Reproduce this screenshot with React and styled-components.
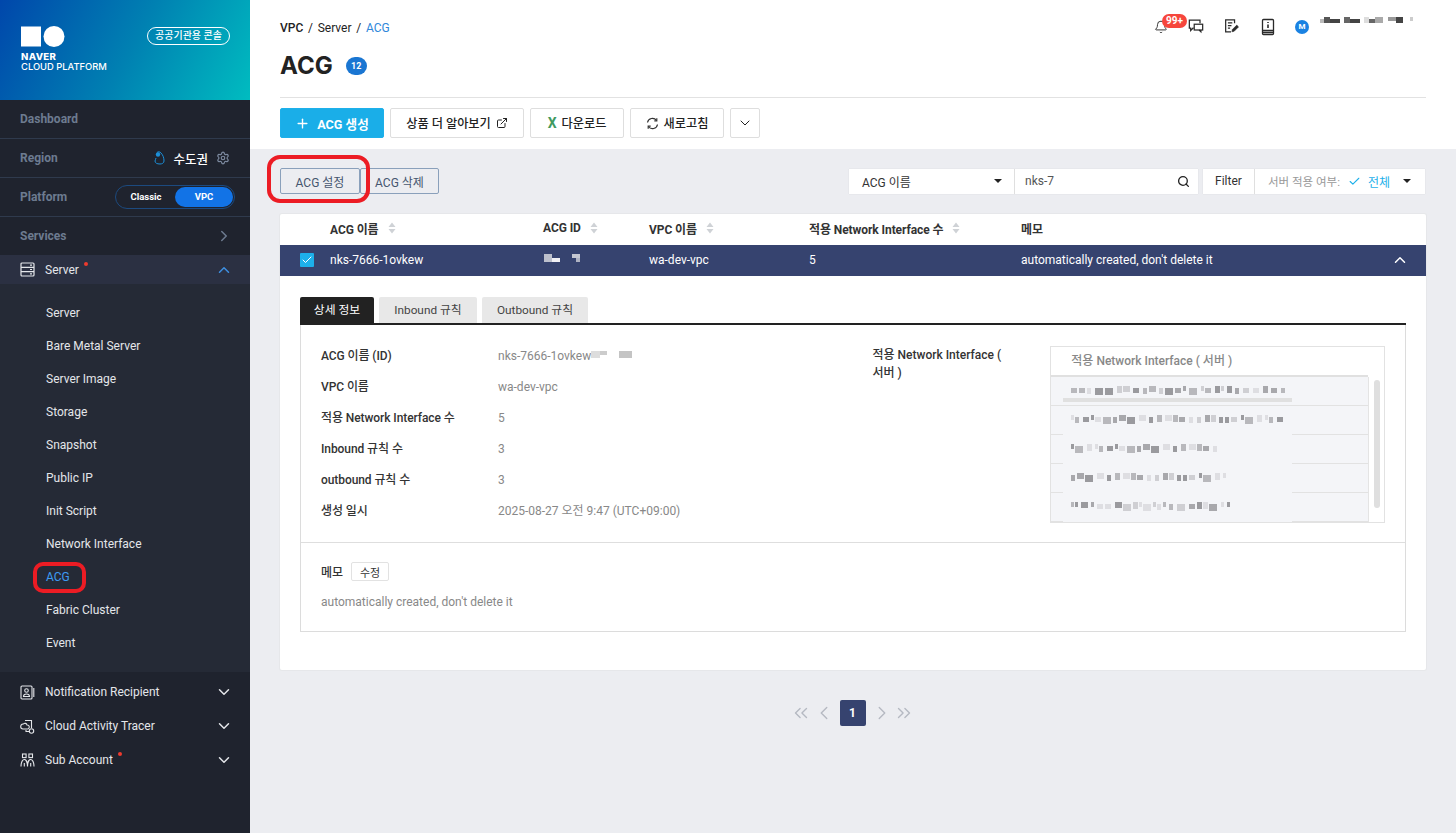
import React from 'react';
import styled, { createGlobalStyle } from 'styled-components';
import {
  Settings, ChevronRight, ChevronDown, ChevronUp, ChevronLeft, ChevronsLeft, ChevronsRight,
  Plus, ExternalLink, Search, Check, Bell,
} from 'lucide-react';

const FONT = 'Roboto, "Noto Sans CJK KR", sans-serif';

const GlobalStyle = createGlobalStyle`
  html, body { margin: 0; padding: 0; height: 100%; }
  body { font-family: ${FONT}; font-size: 12px; color: #222; background: #ecedf1; }
  * { box-sizing: border-box; }
`;

const Page = styled.div`
  display: flex;
  width: 100%;
  height: 833px;
  overflow: hidden;
`;

/* sidebar */
const Sidebar = styled.aside`
  width: 250px;
  flex: none;
  background: #1f232e;
  display: flex;
  flex-direction: column;
`;

const Brand = styled.div`
  height: 100px;
  padding: 26px 20px 0 21px;
  display: flex;
  justify-content: space-between;
  align-items: flex-start;
  background: linear-gradient(118deg, #0047ab 0%, #0081b2 52%, #00bcc0 100%);
  color: #fff;
`;

const BrandText = styled.div`
  margin-top: 5px;
  font-size: 9.4px;
  line-height: 10px;
  font-family: Inter, sans-serif;
  font-weight: 500;
  b { font-weight: 800; display: block; font-size: 9.6px; letter-spacing: 0.35px; }
`;

const ConsoleTag = styled.span`
  height: 18px;
  width: 83px;
  margin-top: 1px;
  border: 1px solid #fff;
  border-radius: 9px;
  font-size: 10px;
  line-height: 15px;
  text-align: center;
  font-weight: 500;
`;

const MenuRow = styled.div`
  height: ${p => (p.$plain ? 38 : 39)}px;
  padding: 0 20px;
  display: flex;
  align-items: center;
  justify-content: space-between;
  border-bottom: ${p => (p.$plain ? 'none' : '1px solid #2f3a4d')};
  color: #6d7b90;
  font-weight: 700;
  font-size: 12px;
`;

const RegionValue = styled.div`
  display: flex;
  align-items: center;
  color: #fff;
  font-weight: 500;
  font-size: 12.5px;
  gap: 8px;
  svg { display: block; }
`;

const PlatformSwitch = styled.div`
  width: 120px;
  height: 24px;
  margin-right: -5px;
  border: 1px solid #1c4a7f;
  border-radius: 12px;
  display: flex;
  align-items: center;
  padding: 1px;
  color: #fff;
  font-weight: 700;
  font-size: 9.5px;
`;

const PlatformOption = styled.span`
  flex: 1;
  height: 20px;
  line-height: 20px;
  text-align: center;
  border-radius: 10px;
  background: ${p => (p.$on ? '#1273e6' : 'transparent')};
`;

const GroupRow = styled.div`
  height: ${p => p.$h || 34}px;
  padding: 0 20px;
  display: flex;
  align-items: center;
  color: #e4e6ea;
  font-size: 12px;
  background: ${p => (p.$open ? '#2b3042' : 'transparent')};
  > span { margin-left: 10px; position: relative; }
  > svg:last-child { margin-left: auto; margin-right: -3px; }
`;

const RedDot = styled.i`
  position: absolute;
  top: -1px;
  right: -9px;
  width: 4px;
  height: 4px;
  border-radius: 50%;
  background: #ee3a2e;
`;

const SubList = styled.div`
  height: 388px;
  padding-top: 13px;
  margin-bottom: 3px;
  background: #252a36;
`;

const SubItem = styled.div`
  height: 33px;
  line-height: 33px;
  padding-left: 46px;
  color: ${p => (p.$on ? '#3e9bf2' : '#e4e6ea')};
  font-size: 12px;
  position: relative;
`;

const Ring = styled.i`
  position: absolute;
  border: 4px solid #ec1c24;
  border-radius: 10px;
  pointer-events: none;
`;

const SidebarRing = styled(Ring)`
  left: 33px;
  top: 1px;
  width: 53px;
  height: 31px;
`;

/* header */
const Main = styled.main`
  flex: 1;
  min-width: 0;
  display: flex;
  flex-direction: column;
`;

const Head = styled.header`
  height: 149px;
  flex: none;
  background: #fff;
  padding: 0 30px;
`;

const TopLine = styled.div`
  height: 51px;
  display: flex;
  justify-content: space-between;
  align-items: flex-start;
`;

const Crumbs = styled.div`
  margin-top: 21px;
  font-size: 12px;
  line-height: 15px;
  display: flex;
  gap: 4.75px;
  b { font-weight: 500; }
  em { font-style: normal; color: #2f87da; }
`;

const TopIcons = styled.div`
  width: 261px;
  margin-right: 11px;
  height: 51px;
  display: flex;
  align-items: flex-start;
  color: #333;
`;

const IconSlot = styled.span`
  display: block;
  flex: none;
  margin-top: 18px;
  margin-left: ${p => p.$gap || 0}px;
  position: relative;
  svg { display: block; }
`;

const Badge = styled.span`
  position: absolute;
  left: 8px;
  top: -4px;
  width: 25px;
  height: 14px;
  border-radius: 7px;
  background: #f6463c;
  color: #fff;
  font-size: 10px;
  font-weight: 700;
  line-height: 14px;
  text-align: center;
`;

const Avatar = styled.span`
  flex: none;
  margin: 20px 0 0 18px;
  width: 14px;
  height: 14px;
  border-radius: 50%;
  background: #1a82e2;
  color: #fff;
  font-size: 8px;
  font-weight: 700;
  line-height: 14px;
  text-align: center;
`;

const TitleLine = styled.div`
  height: 47px;
  padding-top: 1px;
  display: flex;
  align-items: flex-start;
  border-bottom: 1px solid #e2e2e2;
  h1 {
    margin: 0;
    font-size: 24px;
    line-height: 28px;
    font-weight: 700;
    font-family: Inter, sans-serif;
  }
`;

const CountBadge = styled.span`
  margin: 5px 0 0 13px;
  width: 21px;
  height: 18px;
  border-radius: 9px;
  background: #1a76d2;
  color: #fff;
  font-size: 9px;
  font-weight: 700;
  line-height: 18px;
  text-align: center;
`;

const ActionBar = styled.div`
  margin-top: 10px;
  display: flex;
  gap: 6px;
`;

const ActionButton = styled.button`
  height: 30px;
  width: ${p => p.$w}px;
  padding: 0;
  display: flex;
  align-items: center;
  justify-content: center;
  gap: ${p => p.$gap || 5}px;
  border-radius: 2px;
  border: 1px solid ${p => (p.$primary ? '#1db0ea' : '#dedede')};
  background: ${p => (p.$primary ? '#1aaee8' : '#fff')};
  color: ${p => (p.$primary ? '#fff' : '#222')};
  font-family: ${FONT};
  font-size: ${p => (p.$primary ? 12.6 : 12.2)}px;
  font-weight: ${p => (p.$primary ? 700 : 500)};
`;

const ExcelMark = styled.span`
  color: #3f9a5f;
  font-size: 14px;
  font-weight: 700;
`;

/* body */
const Body = styled.div`
  flex: 1;
  padding: 19px 30px 0;
`;

const ToolRow = styled.div`
  display: flex;
  align-items: center;
  justify-content: space-between;
  height: 26px;
  margin-bottom: 20px;
`;

const Left = styled.div`
  display: flex;
  position: relative;
`;

const OutlineButton = styled.button`
  width: ${p => p.$w}px;
  height: 26px;
  padding: 0;
  background: transparent;
  border: 1px solid #8aa0bb;
  border-radius: 2px;
  color: #46566f;
  font-family: ${FONT};
  font-size: 12px;
`;

const ButtonRing = styled(Ring)`
  left: -13px;
  top: -13px;
  width: 103px;
  height: 48px;
  border-radius: 13px;
`;

const Right = styled.div`
  display: flex;
  margin-right: 1px;
`;

const FilterField = styled.div`
  width: ${p => p.$w}px;
  height: 25px;
  margin-right: ${p => p.$mr || 0}px;
  padding: 0 ${p => p.$pr || 12}px 0 ${p => p.$pl || 12}px;
  background: #fff;
  border-right: ${p => (p.$split ? '1px solid #e4e4e4' : 'none')};
  display: flex;
  align-items: center;
  justify-content: space-between;
  font-size: 12px;
  color: ${p => p.$c || '#333'};
  box-shadow: 0 0 1px rgba(0, 0, 0, 0.12);
`;

const Caret = styled.i`
  width: 0;
  height: 0;
  border-left: 4px solid transparent;
  border-right: 4px solid transparent;
  border-top: 4px solid #222;
`;

const ServerFilter = styled.span`
  display: flex;
  align-items: center;
  color: #999;
  font-size: 11.5px;
  svg { margin: 0 7px 0 8px; }
  em { font-style: normal; color: #1db0ea; font-size: 12px; }
`;

const Card = styled.section`
  height: 456px;
  background: #fff;
  box-shadow: 0 0 0 1px #e6e7ea;
  border-radius: 2px;
  margin-bottom: 30px;
`;

const columns = '50px 213px 106px 160px 212px 1fr 35px';

const HeaderRow = styled.div`
  display: grid;
  grid-template-columns: ${columns};
  height: 31px;
  padding-bottom: 3px;
  align-items: center;
  font-weight: 700;
  font-size: 12px;
  letter-spacing: -0.08px;
  color: #333;
  > span { display: flex; align-items: center; gap: 9px; }
`;

const SelectedRow = styled.div`
  display: grid;
  grid-template-columns: ${columns};
  height: 31px;
  padding-bottom: 1px;
  align-items: center;
  background: #36436f;
  color: #fff;
  font-size: 12px;
`;

const CheckBox = styled.span`
  margin-left: 20px;
  width: 14px;
  height: 14px;
  border-radius: 1px;
  background: #1db0ea;
  display: flex;
  align-items: center;
  justify-content: center;
`;

const DetailWrap = styled.div`
  padding: 21px 20px 0;
`;

const Tabs = styled.div`
  display: flex;
  gap: 5px;
  height: 28px;
  border-bottom: 2px solid #222;
`;

const Tab = styled.div`
  width: ${p => p.$w}px;
  height: 26px;
  line-height: 27px;
  text-align: center;
  border-radius: 2px 2px 0 0;
  font-size: 11.8px;
  background: ${p => (p.$on ? '#222' : '#e8e8e8')};
  color: ${p => (p.$on ? '#fff' : '#444')};
`;

const DetailBox = styled.div`
  height: 307px;
  border: 1px solid #dcdcdc;
  border-top: none;
`;

const DetailTop = styled.div`
  height: 218px;
  padding: 16px 20px 0;
  display: flex;
  border-bottom: 1px solid #dedede;
`;

const Fields = styled.div`
  width: 552px;
`;

const Field = styled.div`
  display: flex;
  height: 31px;
  line-height: 31px;
  font-size: 12px;
  color: #888;
  b { width: 177px; font-weight: 500; color: #333; letter-spacing: -0.08px; }
`;

const SideLabel = styled.div`
  width: 178px;
  padding-top: 5px;
  font-size: 12px;
  line-height: 18px;
  font-weight: 500;
  color: #333;
`;

const NicBox = styled.div`
  width: 335px;
  height: 177px;
  margin-top: 5px;
  border: 1px solid #e2e2e2;
  background: #fff;
`;

const NicHead = styled.div`
  height: 30px;
  line-height: 28px;
  padding-left: 20px;
  font-size: 12px;
  font-weight: 500;
  color: #888;
  border-bottom: 2px solid #e0e0e0;
  margin-right: 16px;
`;

const NicBody = styled.div`
  display: flex;
  height: 145px;
`;

const NicRows = styled.div`
  width: 317px;
  background: #f4f5f8;
  overflow: hidden;
`;

const NicRow = styled.div`
  height: 29px;
  border-bottom: 1px solid #e2e2e2;
`;

const NicCell = styled.div`
  margin-left: 12px;
  width: 229px;
  height: ${p => (p.$first ? 25 : 29)}px;
  padding: 6px 0 0 8px;
  background: #f4f5f8;
  border-bottom: ${p => (p.$first ? '4px solid #e0e0e0' : 'none')};
`;

const ScrollTrack = styled.div`
  flex: 1;
  border-left: 1px solid #e4e4e4;
  padding: 3px 4px 0 5px;
`;

const ScrollThumb = styled.div`
  height: 128px;
  border-radius: 3px;
  background: #dfdfdf;
`;

const Memo = styled.div`
  padding: 19px 20px 0;
`;

const MemoHead = styled.div`
  display: flex;
  align-items: center;
  gap: 8px;
  font-size: 12px;
  font-weight: 500;
  color: #333;
`;

const SmallButton = styled.button`
  width: 38px;
  height: 19px;
  padding: 0;
  background: #fff;
  border: 1px solid #e2e2e2;
  border-radius: 2px;
  font-family: ${FONT};
  font-size: 11px;
  color: #333;
`;

const MemoText = styled.p`
  margin: 14px 0 0;
  font-size: 12px;
  color: #888;
`;

const Pager = styled.nav`
  display: flex;
  justify-content: center;
  align-items: center;
  padding-right: 2px;
  color: #b5b9c2;
  svg { display: block; }
`;

const PageNum = styled.span`
  width: 26px;
  height: 26px;
  margin: 0 5px;
  border-radius: 2px;
  background: #36436f;
  color: #fff;
  font-size: 12px;
  font-weight: 700;
  line-height: 26px;
  text-align: center;
`;

/* drawings */
const SortIcon = () => (
  <svg width="8" height="12" viewBox="0 0 8 12">
    <path d="M4 0.5 7.5 5H.5zM4 11.5.5 7h7z" fill="#cfd2d6" />
  </svg>
);

// mosaic blocks standing in for the masked names
const Mosaic = ({ w, h = 14, blocks, style }) => (
  <svg width={w} height={h} style={{ display: 'block', ...style }}>
    {blocks.map(([x, y, bw, bh, c], i) => (
      <rect key={i} x={x} y={y} width={bw} height={bh} fill={c} />
    ))}
  </svg>
);

const strip = (seed, n) => {
  const out = [];
  let x = 0;
  let s = seed;
  while (x < n) {
    s = (s * 37 + 11) % 101;
    const bw = 3 + (s % 6);
    const shade = ['#9a9a9e', '#b8b8bc', '#cfcfd3', '#a8a8ac', '#dedee2'][s % 5];
    out.push([x, 3 + (s % 2) * 2, bw, 5 + (s % 3), shade]);
    x += bw + 1 + (s % 4);
  }
  return out;
};

const Logo = () => (
  <svg width="44" height="21" viewBox="0 0 44 21" style={{ display: 'block' }}>
    <rect x="0" y="0.5" width="20" height="20" fill="#fff" />
    <circle cx="33" cy="10.5" r="10.5" fill="#fff" />
  </svg>
);

const RegionPin = () => (
  <svg width="11" height="14" viewBox="0 0 11 14" fill="none">
    <path d="M3 1.500c1-1 3-1 4 .5 2 2 3 5 3 8 0 2-2 3-4 3-3 0-5-1-5-3 0-1 1-2 1-3" stroke="#1c8fd8" strokeWidth="1" />
    <circle cx="4" cy="3.500" r="2.200" fill="#1c8fd8" />
  </svg>
);

const ServerIcon = () => (
  <svg width="15" height="15" viewBox="0 0 15 15" fill="none" stroke="#e4e6ea" strokeWidth="1.2">
    <rect x="1" y="1" width="13" height="13" rx="1" />
    <path d="M1 5.300h13M1 9.700h13" />
    <path d="M10 3.200h2M10 7.500h2M10 11.800h2" />
  </svg>
);

const RecipientIcon = () => (
  <svg width="15" height="15" viewBox="0 0 15 15" fill="none" stroke="#e4e6ea" strokeWidth="1.1">
    <rect x="1" y="1" width="11" height="13" rx="1" />
    <path d="M13.800 3v9" />
    <circle cx="6.500" cy="5.500" r="1.800" />
    <path d="M3.500 11.500c0-3.400 6-3.400 6 0z" />
  </svg>
);

const TracerIcon = () => (
  <svg width="15" height="15" viewBox="0 0 15 15" fill="none" stroke="#e4e6ea" strokeWidth="1.1">
    <path d="M5 1.500h6.500v7.500" />
    <path d="M3.500 5a2 2 0 0 1 3.500 1 2 2 0 0 1 .5 4H3a2.500 2.500 0 0 1 .5-5z" />
    <path d="M6 11v1.500h3" />
    <circle cx="11.500" cy="12" r="2.200" />
  </svg>
);

const AccountIcon = () => (
  <svg width="15" height="15" viewBox="0 0 15 15" fill="none" stroke="#e4e6ea" strokeWidth="1.1">
    <rect x="2.500" y="1" width="3.600" height="3.600" />
    <rect x="8.900" y="1" width="3.600" height="3.600" />
    <path d="M1 13.500c0-5 2-7 3.300-7s3.200 2 3.200 7c0-5 1.900-7 3.200-7s3.300 2 3.300 7" />
    <path d="M4.300 10v3.500M10.700 10v3.500" />
  </svg>
);

const ChatIcon = () => (
  <svg width="16" height="16" viewBox="0 0 18 18" fill="none" stroke="#2a2a2a" strokeWidth="1.400">
    <path d="M13.500 6V2.500h-12v9H3v2.500l2.500-2.500h1" />
    <rect x="7" y="7" width="9.500" height="6.500" fill="#fff" />
    <path d="M12.500 13.500l2 2v-2" />
  </svg>
);

const NoteIcon = () => (
  <svg width="16" height="16" viewBox="0 0 18 18" fill="none" stroke="#2a2a2a" strokeWidth="1.400">
    <path d="M13 6V2H3v13.500h6" />
    <path d="M5.500 5.500h5M5.500 8.500h4M5.500 11.500h2.500" />
    <path d="M10 15.500l.5-2.500 5-5 2 2-5 5z" fill="#2a2a2a" strokeWidth="0.600" />
  </svg>
);

const BookIcon = () => (
  <svg width="18" height="18" viewBox="0 0 18 18" fill="none" stroke="#2a2a2a" strokeWidth="1.300">
    <rect x="3.500" y="1.500" width="11" height="15" rx="1" />
    <path d="M3.500 12.500h11M3.500 14.500h11" />
    <path d="M9 4v1M9 6.500v3.500" strokeWidth="1.600" />
  </svg>
);

const RefreshIcon = () => (
  <svg width="13" height="13" viewBox="0 0 13 13" fill="none" stroke="#333" strokeWidth="1.200">
    <path d="M1.500 5.500A5 5 0 0 1 10.500 3.500M11.500 7.500A5 5 0 0 1 2.500 9.500" />
    <path d="M10.800 1.300v2.500H8.300M2.200 11.700V9.200h2.500" />
  </svg>
);

const sub = ['Server', 'Bare Metal Server', 'Server Image', 'Storage', 'Snapshot', 'Public IP', 'Init Script', 'Network Interface', 'ACG', 'Fabric Cluster', 'Event'];

const fields = [
  ['VPC 이름', 'wa-dev-vpc'],
  ['적용 Network Interface 수', '5'],
  ['Inbound 규칙 수', '3'],
  ['outbound 규칙 수', '3'],
  ['생성 일시', '2025-08-27 오전 9:47 (UTC+09:00)'],
];

const nicRows = [
  strip(3, 212),
  strip(14, 212),
  strip(27, 150),
  strip(41, 155),
  strip(58, 158),
];

export default function App() {
  return (
    <Page>
      <GlobalStyle />
      <Sidebar>
        <Brand>
          <div>
            <Logo />
            <BrandText>
              <b>NAVER</b>
              CLOUD PLATFORM
            </BrandText>
          </div>
          <ConsoleTag>공공기관용 콘솔</ConsoleTag>
        </Brand>
        <MenuRow>Dashboard</MenuRow>
        <MenuRow>
          Region
          <RegionValue>
            <RegionPin />
            수도권
            <Settings size={14} color="#7d8aa0" />
          </RegionValue>
        </MenuRow>
        <MenuRow>
          Platform
          <PlatformSwitch>
            <PlatformOption>Classic</PlatformOption>
            <PlatformOption $on>VPC</PlatformOption>
          </PlatformSwitch>
        </MenuRow>
        <MenuRow $plain>
          Services
          <ChevronRight size={18} color="#6d7b90" style={{ marginRight: -3 }} />
        </MenuRow>
        <GroupRow $open $h={29}>
          <ServerIcon />
          <span>
            Server
            <RedDot />
          </span>
          <ChevronUp size={18} color="#3e8fe0" />
        </GroupRow>
        <SubList>
          {sub.map(s => (
            <SubItem key={s} $on={s === 'ACG'}>
              {s}
              {s === 'ACG' && <SidebarRing />}
            </SubItem>
          ))}
        </SubList>
        <GroupRow>
          <RecipientIcon />
          <span>Notification Recipient</span>
          <ChevronDown size={18} color="#e4e6ea" />
        </GroupRow>
        <GroupRow>
          <TracerIcon />
          <span>Cloud Activity Tracer</span>
          <ChevronDown size={18} color="#e4e6ea" />
        </GroupRow>
        <GroupRow>
          <AccountIcon />
          <span>
            Sub Account
            <RedDot />
          </span>
          <ChevronDown size={18} color="#e4e6ea" />
        </GroupRow>
      </Sidebar>

      <Main>
        <Head>
          <TopLine>
            <Crumbs>
              <b>VPC</b> / <span>Server</span> / <em>ACG</em>
            </Crumbs>
            <TopIcons>
              <IconSlot>
                <Bell size={14} color="#2a2a2a" strokeWidth={1.6} style={{ marginTop: 2 }} />
                <Badge>99+</Badge>
              </IconSlot>
              <IconSlot $gap={20}><ChatIcon /></IconSlot>
              <IconSlot $gap={19}><NoteIcon /></IconSlot>
              <IconSlot $gap={20}><BookIcon /></IconSlot>
              <Avatar>M</Avatar>
              <Mosaic
                w={95}
                h={12}
                style={{ margin: '15px 0 0 11px' }}
                blocks={[
                  [0, 4, 4, 4, '#bbb'], [4, 2, 6, 6, '#555'], [10, 4, 10, 4, '#444'], [24, 2, 6, 6, '#666'], [30, 4, 10, 4, '#444'],
                  [44, 2, 5, 6, '#ddd'], [49, 4, 6, 4, '#666'], [55, 2, 8, 6, '#aaa'], [68, 2, 8, 4, '#999'], [76, 2, 7, 6, '#444'], [90, 2, 3, 4, '#ccc'],
                ]}
              />
            </TopIcons>
          </TopLine>
          <TitleLine>
            <h1>ACG</h1>
            <CountBadge>12</CountBadge>
          </TitleLine>
          <ActionBar>
            <ActionButton $primary $w={104} $gap={7}>
              <Plus size={15} strokeWidth={2.2} />
              ACG 생성
            </ActionButton>
            <ActionButton $w={134}>
              상품 더 알아보기
              <ExternalLink size={12} />
            </ActionButton>
            <ActionButton $w={94}>
              <ExcelMark>X</ExcelMark>
              다운로드
            </ActionButton>
            <ActionButton $w={94}>
              <RefreshIcon />
              새로고침
            </ActionButton>
            <ActionButton $w={30}>
              <ChevronDown size={16} strokeWidth={1.5} />
            </ActionButton>
          </ActionBar>
        </Head>

        <Body>
          <ToolRow>
            <Left>
              <OutlineButton $w={80}>ACG 설정</OutlineButton>
              <OutlineButton $w={79}>ACG 삭제</OutlineButton>
              <ButtonRing />
            </Left>
            <Right>
              <FilterField $w={166} $split $pl={13}>
                ACG 이름
                <Caret />
              </FilterField>
              <FilterField $w={183} $mr={5} $pl={10} $pr={8} $c="#555">
                nks-7
                <Search size={13} color="#222" strokeWidth={2.4} />
              </FilterField>
              <FilterField $w={52} $split>Filter</FilterField>
              <FilterField $w={170} $pl={13} $pr={14}>
                <ServerFilter>
                  서버 적용 여부:
                  <Check size={13} color="#1db0ea" />
                  <em>전체</em>
                </ServerFilter>
                <Caret />
              </FilterField>
            </Right>
          </ToolRow>

          <Card>
            <HeaderRow>
              <i />
              <span>ACG 이름 <SortIcon /></span>
              <span>ACG ID <SortIcon /></span>
              <span>VPC 이름 <SortIcon /></span>
              <span>적용 Network Interface 수 <SortIcon /></span>
              <span>메모</span>
            </HeaderRow>
            <SelectedRow>
              <CheckBox><Check size={12} color="#fff" strokeWidth={2} /></CheckBox>
              <span>nks-7666-1ovkew</span>
              <Mosaic w={40} h={12} style={{ marginTop: -5 }} blocks={[[1, 2, 8, 8, '#bcc0cc'], [9, 6, 8, 4, '#f0f0f4'], [29, 2, 8, 4, '#c5c8d2'], [33, 6, 4, 4, '#aeb2c2']]} />
              <span>wa-dev-vpc</span>
              <span>5</span>
              <span>automatically created, don't delete it</span>
              <ChevronUp size={18} strokeWidth={2} />
            </SelectedRow>
            <DetailWrap>
              <Tabs>
                <Tab $on $w={74}>상세 정보</Tab>
                <Tab $w={98}>Inbound 규칙</Tab>
                <Tab $w={106}>Outbound 규칙</Tab>
              </Tabs>
              <DetailBox>
                <DetailTop>
                  <Fields>
                    <Field>
                      <b>ACG 이름 (ID)</b>
                      nks-7666-1ovkew
                      <Mosaic w={45} h={12} style={{ marginTop: 7 }} blocks={[[0, 3, 9, 7, '#ddd'], [9, 3, 7, 4, '#ccc'], [28, 3, 13, 7, '#c4c4c4']]} />
                    </Field>
                    {fields.map(([k, v]) => (
                      <Field key={k}>
                        <b>{k}</b>
                        {v}
                      </Field>
                    ))}
                  </Fields>
                  <SideLabel>
                    적용 Network Interface (
                    <br />
                    서버 )
                  </SideLabel>
                  <NicBox>
                    <NicHead>적용 Network Interface ( 서버 )</NicHead>
                    <NicBody>
                      <NicRows>
                        {nicRows.map((blocks, i) => (
                          <NicRow key={i}>
                            <NicCell $first={i === 0}>
                              <Mosaic w={214} h={14} blocks={blocks} />
                            </NicCell>
                          </NicRow>
                        ))}
                      </NicRows>
                      <ScrollTrack><ScrollThumb /></ScrollTrack>
                    </NicBody>
                  </NicBox>
                </DetailTop>
                <Memo>
                  <MemoHead>
                    메모
                    <SmallButton>수정</SmallButton>
                  </MemoHead>
                  <MemoText>automatically created, don't delete it</MemoText>
                </Memo>
              </DetailBox>
            </DetailWrap>
          </Card>

          <Pager>
            <ChevronsLeft size={22} strokeWidth={1.5} />
            <ChevronLeft size={22} strokeWidth={1.5} style={{ marginLeft: 1 }} />
            <PageNum>1</PageNum>
            <ChevronRight size={22} strokeWidth={1.5} />
            <ChevronsRight size={22} strokeWidth={1.5} />
          </Pager>
        </Body>
      </Main>
    </Page>
  );
}
